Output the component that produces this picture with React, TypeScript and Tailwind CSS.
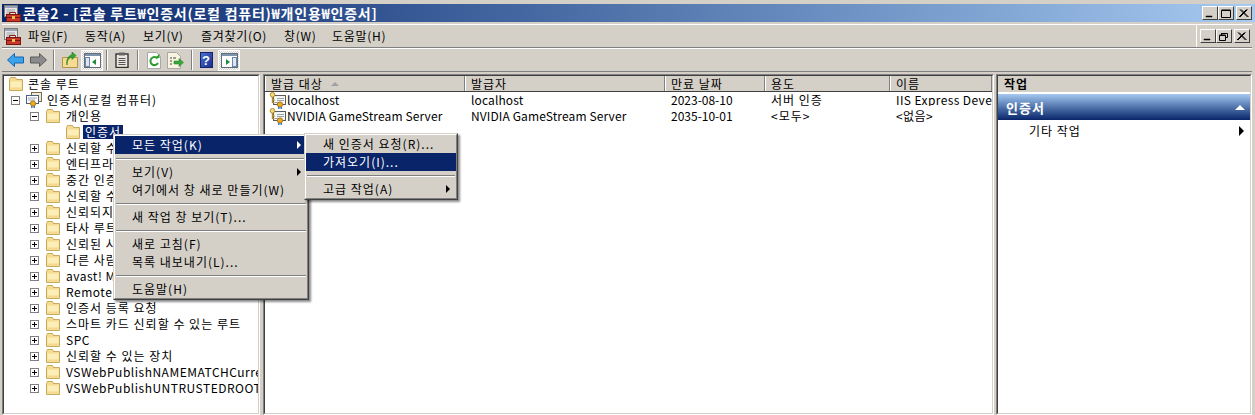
import React from 'react';

const FONT = "font-['Noto_Sans_CJK_KR','Liberation_Sans',sans-serif]";

const Folder = () => (
  <svg width="16" height="16" viewBox="0 0 16 16" className="shrink-0">
    <path d="M1.5 3.5V14.5H14.5V3.5H8.5L7.5 1.5H2.5Z" fill="#f6dc90" stroke="#c9a95e" />
    <path d="M2.5 5.5H13.5V13.5H2.5Z" fill="#fbeeb8" />
    <path d="M2.5 11.5H13.5V13.5H2.5Z" fill="#f3d98a" />
  </svg>
);

const CertIcon = () => (
  <svg width="18" height="17" viewBox="0 0 18 17" className="shrink-0">
    <rect x="4.5" y="3.5" width="12" height="9" fill="#f4f4f0" stroke="#5a5a5a" />
    <path d="M8 6.5H15M8 8.5H15M6 10.5H10" stroke="#9aa6b4" />
    <circle cx="3.5" cy="2.8" r="2.3" fill="#f4d87a" stroke="#b08c30" />
    <path d="M3.5 5V11M3.5 8H5.5M3.5 10.5H5.5" stroke="#b08c30" strokeWidth="1.4" />
    <circle cx="11" cy="12.5" r="2.6" fill="#eab020" stroke="#b0701a" />
    <path d="M9.8 15V17M12.2 15V17" stroke="#2f6fb7" strokeWidth="1.4" />
  </svg>
);

const ComputerCert = () => (
  <svg width="18" height="16" viewBox="0 0 18 16" className="shrink-0">
    <rect x="5.5" y="0.5" width="10" height="9" fill="#efe9d6" stroke="#7a6a50" />
    <rect x="0.5" y="3.5" width="12" height="8" fill="#fff" stroke="#4b5f80" />
    <path d="M2 6H11M2 8H9" stroke="#9aa6b4" />
    <circle cx="7" cy="11.5" r="2.6" fill="#eab020" stroke="#b0701a" />
    <path d="M5.8 14V16M8.2 14V16" stroke="#2f6fb7" strokeWidth="1.4" />
  </svg>
);

const Expander = ({ open }: { open?: boolean }) => (
  <div className="relative w-[9px] h-[9px] border border-[#808080] bg-white shrink-0">
    <div className="absolute left-[1px] top-[3px] w-[5px] h-[1px] bg-black" />
    {!open && <div className="absolute left-[3px] top-[1px] w-[1px] h-[5px] bg-black" />}
  </div>
);

const MmcIcon = () => (
  <svg width="17" height="17" viewBox="0 0 17 17" className="shrink-0">
    <rect x="0.5" y="0.5" width="13" height="11" fill="#e6e6e6" stroke="#7a7a7a" />
    <rect x="1" y="1" width="12" height="2" fill="#9aa3b5" />
    <path d="M2.5 5H11M2.5 7H11M2.5 9H7" stroke="#a0a0a0" />
    <path d="M5.5 9V7.5H11.5V9" fill="none" stroke="#8c2018" />
    <rect x="2.5" y="9.5" width="14" height="7" fill="#c9372c" stroke="#7a1710" />
    <path d="M3 12.5H16" stroke="#7a1710" />
    <rect x="8" y="11" width="3" height="3" fill="#f0c24a" />
  </svg>
);

const WinBtn = ({ kind }: { kind: 'min' | 'max' | 'restore' | 'close' }) => (
  <div className="w-[16px] h-[14px] bg-[#d4d0c8] border-t border-l border-t-white border-l-white border-r border-b border-r-[#404040] border-b-[#404040] flex items-center justify-center shrink-0">
    <svg width="10" height="9" viewBox="0 0 10 9">
      {kind === 'min' && <path d="M1 8H7V7H1Z" fill="#000" stroke="#000" strokeWidth="0.5" />}
      {kind === 'max' && <path d="M0.5 1.5H9.5V8.5H0.5ZM0.5 1H9.5" fill="none" stroke="#000" />}
      {kind === 'restore' && <path d="M2.5 1.5H8.5V5.5H6.5M2.5 1V3M0.5 3.5H6.5V8.5H0.5ZM0.5 3H6.5" fill="none" stroke="#000" />}
      {kind === 'close' && <path d="M1 0.5L8.5 8M8.5 0.5L1 8M2 0.5L9.5 8M7.5 0.5L0 8" fill="none" stroke="#000" />}
    </svg>
  </div>
);

const ToolSep = () => <div className="w-[2px] h-[20px] border-l border-l-[#808080] border-r border-r-white shrink-0" />;

const PaneIcon = ({ right }: { right?: boolean }) => (
  <svg width="17" height="15" viewBox="0 0 17 15">
    <rect x="0.5" y="0.5" width="16" height="14" fill="#fff" stroke="#5f6f80" />
    <rect x="1" y="1" width="15" height="2" fill="#7f93ad" />
    {right ? (
      <>
        <rect x="11.5" y="4.5" width="4" height="9" fill="#dfe7f2" stroke="#6d87a8" />
        <path d="M5 6V12L9 9Z" fill="#1e8a3a" />
      </>
    ) : (
      <>
        <rect x="1.5" y="4.5" width="4" height="9" fill="#dfe7f2" stroke="#6d87a8" />
        <path d="M12 6V12L8 9Z" fill="#1e8a3a" />
      </>
    )}
  </svg>
);

const PressedBtn = ({ right }: { right?: boolean }) => (
  <div className="w-[22px] h-[21px] flex items-center justify-center border border-white bg-[repeating-conic-gradient(#ffffff_0_25%,#d4d0c8_0_50%)] bg-[length:2px_2px] shrink-0">
    <PaneIcon right={right} />
  </div>
);

const Toolbar = () => (
  <div className="h-[24px] flex items-center pl-[5px] border-t border-t-white border-b border-b-[#808080] mr-[3px]">
    <svg width="17" height="14" viewBox="0 0 17 14" className="shrink-0">
      <path d="M0.5 7L7.5 0.5V4H16.5V10H7.5V13.5Z" fill="#3aa3ea" stroke="#1665b5" />
    </svg>
    <svg width="17" height="14" viewBox="0 0 17 14" className="shrink-0 ml-[6px]">
      <path d="M16.5 7L9.5 0.5V4H0.5V10H9.5V13.5Z" fill="#8b8b8b" stroke="#5a5a5a" />
    </svg>
    <div className="ml-[6px]"><ToolSep /></div>
    <svg width="16" height="16" viewBox="0 0 16 16" className="shrink-0 ml-[7px]">
      <path d="M0.5 5.5H15.5V15.5H0.5Z" fill="#f6dc90" stroke="#b5934a" />
      <path d="M5 13C5 8 7 6 10 5V7.5L14 3.5L10 0V2.5C6 4 4 8 5 13Z" fill="#35a532" stroke="#1d7a1b" strokeWidth="0.6" />
    </svg>
    <div className="ml-[3px]"><PressedBtn /></div>
    <div className="ml-[3px]"><ToolSep /></div>
    <svg width="14" height="16" viewBox="0 0 14 16" className="shrink-0 ml-[7px]">
      <rect x="1" y="2" width="12" height="13.5" fill="#e9e7e0" stroke="#333" strokeWidth="1.4" />
      <rect x="4" y="0.5" width="6" height="3" fill="#666" />
      <path d="M3.5 6.5H10.5M3.5 8.5H10.5M3.5 10.5H10.5M3.5 12.5H10.5" stroke="#555" />
    </svg>
    <div className="ml-[8px]"><ToolSep /></div>
    <svg width="14" height="17" viewBox="0 0 14 17" className="shrink-0 ml-[8px]">
      <path d="M0.5 0.5H9.5L13.5 4.5V16.5H0.5Z" fill="#fff" stroke="#a8a8a8" />
      <path d="M10.5 6.5A4 4 0 1 0 11 11" fill="none" stroke="#2d9b2d" strokeWidth="2" />
      <path d="M8 6H12.5V2Z" fill="#2d9b2d" />
    </svg>
    <svg width="17" height="17" viewBox="0 0 17 17" className="shrink-0 ml-[6px]">
      <path d="M0.5 0.5H9.5L13.5 4.5V16.5H0.5Z" fill="#f8f4e0" stroke="#a8a8a8" />
      <path d="M3 6H5M3 9H5M3 12H5M6 6H9" stroke="#444" />
      <path d="M7 9H12V6.5L16.5 10.5L12 14.5V12H7Z" fill="#39a839" stroke="#1f7a1f" strokeWidth="0.5" />
    </svg>
    <div className="ml-[7px]"><ToolSep /></div>
    <div className="ml-[7px] w-[13px] h-[16px] bg-gradient-to-br from-[#4a6fd0] to-[#1b2f90] border border-[#16226e] flex items-center justify-center text-white text-[13px] font-bold leading-none font-['Liberation_Sans',sans-serif] shrink-0">?</div>
    <div className="ml-[5px]"><PressedBtn right /></div>
  </div>
);

// 메뉴에 가려진 항목도 그대로 둔다
const treeRows = [
  '신뢰할 수 있는 루트 인증 기관',
  '엔터프라이즈 신뢰',
  '중간 인증 기관',
  '신뢰할 수 있는 게시자',
  '신뢰되지 않은 인증서',
  '타사 루트 인증 기관',
  '신뢰된 사용자',
  '다른 사람',
  'avast! Mail Scanner Root',
  'Remote Desktop',
  '인증서 등록 요청',
  '스마트 카드 신뢰할 수 있는 루트',
  'SPC',
  '신뢰할 수 있는 장치',
  'VSWebPublishNAMEMATCHCurrentUser',
  'VSWebPublishUNTRUSTEDROOTCurrentUser',
];

const Sunken = ({ className, children }: { className: string; children: React.ReactNode }) => (
  <div className={`${className} border-t border-l border-t-[#808080] border-l-[#808080] border-r border-b border-r-white border-b-white`}>
    <div className="w-full h-full bg-white overflow-hidden border-t border-l border-t-[#404040] border-l-[#404040] border-r border-b border-r-[#d4d0c8] border-b-[#d4d0c8]">
      {children}
    </div>
  </div>
);

const Tree = () => (
  <Sunken className="w-[258px] h-full shrink-0">
    <div className="h-[16px] flex items-center gap-[4px] pl-[4px] whitespace-nowrap">
      <Folder />
      <span>콘솔 루트</span>
    </div>
    <div className="h-[16px] flex items-center pl-[7px] whitespace-nowrap">
      <Expander open />
      <div className="ml-[6px]"><ComputerCert /></div>
      <span className="ml-[3px]">인증서(로컬 컴퓨터)</span>
    </div>
    <div className="h-[16px] flex items-center pl-[26px] whitespace-nowrap">
      <Expander open />
      <div className="ml-[6px]"><Folder /></div>
      <span className="ml-[5px]">개인용</span>
    </div>
    <div className="h-[16px] flex items-center pl-[61px] whitespace-nowrap">
      <Folder />
      <span className="ml-[2px] h-[14px] px-[2px] flex items-center bg-[#0a246a] text-white">인증서</span>
    </div>
    {treeRows.map((label) => (
      <div key={label} className="h-[16px] flex items-center pl-[26px] whitespace-nowrap">
        <Expander />
        <div className="ml-[6px]"><Folder /></div>
        <span className={/^[A-Za-z]/.test(label) ? 'ml-[5px] tracking-[0.5px]' : 'ml-[5px]'}>{label}</span>
      </div>
    ))}
  </Sunken>
);

const columns = [
  { name: '발급 대상', width: 'w-[200px]', sort: true },
  { name: '발급자', width: 'w-[200px]' },
  { name: '만료 날짜', width: 'w-[100px]' },
  { name: '용도', width: 'w-[125px]' },
  { name: '이름', width: 'w-[102px]' },
];

const certs = [
  ['localhost', 'localhost', '2023-08-10', '서버 인증', 'IIS Express Development Certificate'],
  ['NVIDIA GameStream Server', 'NVIDIA GameStream Server', '2035-10-01', '<모두>', '<없음>'],
];

const CertList = () => (
  <Sunken className="w-[731px] h-full shrink-0">
    <div className="flex h-[16px] bg-[#d4d0c8] border-b border-b-[#404040]">
      {columns.map((c) => (
        <div key={c.name} className={`${c.width} shrink-0 pl-[5px] flex items-center gap-[8px] border-l border-l-white border-r border-r-[#808080] overflow-hidden whitespace-nowrap`}>
          <span>{c.name}</span>
          {c.sort && <div className="w-0 h-0 border-x-[4px] border-x-transparent border-b-[4px] border-b-[#a0a0a0]" />}
        </div>
      ))}
    </div>
    {certs.map((row) => (
      <div key={row[0]} className="flex h-[16px] items-center whitespace-nowrap">
        <div className="w-[200px] shrink-0 pl-[4px] flex items-center overflow-hidden tracking-[0.12px]">
          <CertIcon />
          <span>{row[0]}</span>
        </div>
        <div className="w-[200px] shrink-0 pl-[6px] overflow-hidden tracking-[0.12px]">{row[1]}</div>
        <div className="w-[100px] shrink-0 pl-[6px] overflow-hidden tracking-normal">{row[2]}</div>
        <div className="w-[125px] shrink-0 pl-[6px] overflow-hidden">{row[3]}</div>
        <div className="w-[102px] shrink-0 pl-[6px] overflow-hidden tracking-[0.4px]">{row[4]}</div>
      </div>
    ))}
  </Sunken>
);

const ActionPane = () => (
  <Sunken className="w-[256px] h-full shrink-0">
    <div className="h-[17px] bg-[#d4d0c8] pl-[6px] font-bold flex items-center border-b border-b-white">작업</div>
    <div className="h-[26px] mt-[1px] bg-gradient-to-b from-[#a6caf0] to-[#0a246a] flex items-center justify-between pl-[8px] pr-[5px] text-white font-bold text-[13px]">
      <span>인증서</span>
      <div className="w-0 h-0 border-x-[5px] border-x-transparent border-b-[5px] border-b-white" />
    </div>
    <div className="h-[22px] flex items-center justify-between pl-[31px] pr-[6px]">
      <span>기타 작업</span>
      <div className="w-0 h-0 border-y-[5px] border-y-transparent border-l-[5px] border-l-black" />
    </div>
  </Sunken>
);

const MenuItem = ({ label, active, arrow }: { label: string; active?: boolean; arrow?: boolean }) => (
  <div className={`h-[18px] flex items-center justify-between pl-[17px] pr-[6px] pb-[1px] whitespace-nowrap ${active ? 'bg-[#0a246a] text-white' : 'text-black'}`}>
    <span>{label}</span>
    {arrow && <div className={`w-0 h-0 border-y-[4px] border-y-transparent border-l-[4px] ${active ? 'border-l-white' : 'border-l-black'}`} />}
  </div>
);

const MenuSep = () => (
  <div className="h-[9px] flex items-center px-[1px]">
    <div className="w-full h-[2px] border-t border-t-[#808080] border-b border-b-white" />
  </div>
);

const MenuFrame = ({ className, children }: { className: string; children: React.ReactNode }) => (
  <div className={`absolute ${className} bg-[#d4d0c8] border-t border-l border-t-[#d4d0c8] border-l-[#d4d0c8] border-r border-b border-r-[#404040] border-b-[#404040] shadow-[2px_2px_2px_rgba(0,0,0,0.45)]`}>
    <div className="border-t border-l border-t-white border-l-white border-r border-b border-r-[#808080] border-b-[#808080]">
      {children}
    </div>
  </div>
);

export default function App() {
  return (
    <div className={`relative w-[1255px] h-[415px] overflow-hidden bg-[#d4d0c8] text-black text-[12px] leading-none tracking-[1px] ${FONT}`}>
      <div className="h-[4px]" />
      {/* title bar */}
      <div className="h-[18px] ml-[2px] flex items-center bg-gradient-to-r from-[#0a246a] to-[#a6caf0] pl-[2px] pr-[3px] text-white font-bold text-[14px]">
        <MmcIcon />
        <span className="ml-[2px] whitespace-nowrap tracking-[0.75px]">콘솔2 - [콘솔 루트₩인증서(로컬 컴퓨터)₩개인용₩인증서]</span>
        <div className="ml-auto flex">
          <WinBtn kind="min" />
          <WinBtn kind="max" />
          <div className="ml-[2px]"><WinBtn kind="close" /></div>
        </div>
      </div>
      <div className="h-[2px]" />
      {/* menu bar */}
      <div className="h-[24px] ml-[2px] mr-[3px] flex items-center pl-[2px] border-t border-t-white border-b border-b-[#808080] tracking-[0.7px]">
        <MmcIcon />
        <div className="ml-[7px] flex whitespace-nowrap">
          <span className="w-[57px]">파일(F)</span>
          <span className="w-[58px]">동작(A)</span>
          <span className="w-[58px]">보기(V)</span>
          <span className="w-[83px]">즐겨찾기(O)</span>
          <span className="w-[48px]">창(W)</span>
          <span>도움말(H)</span>
        </div>
        <div className="ml-auto h-full flex items-center gap-0 border-l border-l-white pl-[3px] pr-[2px]">
          <WinBtn kind="min" />
          <WinBtn kind="restore" />
          <div className="ml-[2px]"><WinBtn kind="close" /></div>
        </div>
      </div>
      <div className="ml-[2px]"><Toolbar /></div>
      <div className="h-[2px]" />
      {/* panes */}
      <div className="h-[341px] pl-[2px] flex items-stretch">
        <Tree />
        <div className="ml-[3px]"><CertList /></div>
        <div className="ml-[2px]"><ActionPane /></div>
      </div>

      {/* context menu */}
      <MenuFrame className="left-[113px] top-[134px] w-[196px]">
        <MenuItem label="모든 작업(K)" active arrow />
        <MenuSep />
        <MenuItem label="보기(V)" arrow />
        <MenuItem label="여기에서 창 새로 만들기(W)" />
        <MenuSep />
        <MenuItem label="새 작업 창 보기(T)..." />
        <MenuSep />
        <MenuItem label="새로 고침(F)" />
        <MenuItem label="목록 내보내기(L)..." />
        <MenuSep />
        <MenuItem label="도움말(H)" />
      </MenuFrame>
      <MenuFrame className="left-[304px] top-[133px] w-[154px]">
        <MenuItem label="새 인증서 요청(R)..." />
        <MenuItem label="가져오기(I)..." active />
        <MenuSep />
        <MenuItem label="고급 작업(A)" arrow />
      </MenuFrame>
    </div>
  );
}
